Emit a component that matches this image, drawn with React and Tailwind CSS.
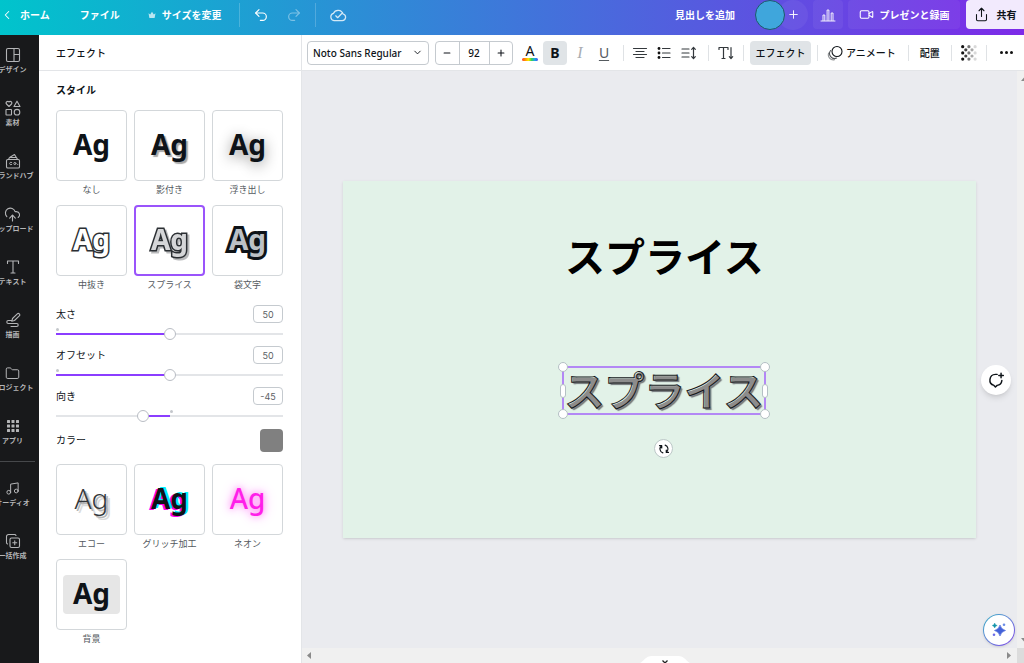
import React, { useState } from "react";
import {
  ChevronLeft, ChevronDown, Undo2, Redo2, Plus, Minus, Video, Share,
  Folder, Music, CloudUpload,
} from "lucide-react";

const stroke = {
  fill: "none",
  stroke: "currentColor",
  strokeWidth: 1.1,
  strokeLinecap: "round",
  strokeLinejoin: "round",
};

const S = ({ size = 16, children, ...rest }) => (
  <svg width={size} height={size} viewBox="0 0 16 16" {...stroke} aria-hidden="true" {...rest}>
    {children}
  </svg>
);

const CrownIcon = () => (
  <svg width="8" height="8" viewBox="0 0 8 8" fill="currentColor" aria-hidden="true">
    <path d="M0.5 2.2 2.2 3.4 4 0.8 5.8 3.4 7.5 2.2 6.6 7H1.4Z" />
  </svg>
);
const CloudCheckIcon = () => (
  <S size={18}>
    <path d="M4.5 13h7.2a3 3 0 0 0 .8-5.9A4.6 4.6 0 0 0 3.9 6.6 3.3 3.3 0 0 0 4.5 13Z" />
    <path d="m6 8.7 1.7 1.7L12 6" />
  </S>
);
const ChartIcon = () => (
  <S strokeWidth="0.9">
    <path d="M1 14h14M3 13.5V8h1.800v5.500M7.100 13.500V3h1.800v10.500M11.200 13.500V6H13v7.500" />
  </S>
);
const DesignIcon = () => (
  <S>
    <rect x="1.500" y="1.500" width="13" height="13" rx="1.500" />
    <path d="M9 1.500v13M9 7.500h5.500" />
  </S>
);
const ElementsIcon = () => (
  <S>
    <path d="M4 6.500 1.500 4a1.500 1.500 0 0 1 2.500-2 1.500 1.500 0 0 1 2.500 2ZM12 1.200l3 5.300H9Z" />
    <rect x="1" y="9.500" width="5.500" height="5.500" rx=".5" />
    <circle cx="12" cy="12.200" r="2.800" />
  </S>
);
const BrandIcon = () => (
  <S>
    <rect x="1.500" y="6.500" width="13" height="8.500" rx="1.300" />
    <path d="M3.500 6.500 4.500 4.500h7l1 2M5 4.300l4.500-2.800 1.700 2.700" />
    <path d="M6.800 9.500a1.300 1.300 0 1 0 0 2M11 10.500a1.100 1.100 0 1 1-2.200 0 1.100 1.100 0 0 1 2.200 0M12.700 11.500h.1" strokeWidth=".9" />
  </S>
);
const TextIcon = () => (
  <S>
    <path d="M2.500 4.500V2h11v2.500M8 2v12M6 14h4" />
  </S>
);
const DrawIcon = () => (
  <S>
    <path d="m7.500 6.500 4.800-4.600a1.400 1.400 0 0 1 2 2L9.500 8.500l-2.700.8ZM6.500 8.500H3.300a1.500 1.500 0 0 0 0 3h8.400a1.500 1.500 0 0 1 0 3H6" />
  </S>
);
const AppsIcon = () => (
  <svg width="16" height="16" viewBox="0 0 16 16" fill="currentColor" aria-hidden="true">
    {[2, 6.5, 11].map((y) => [2, 6.5, 11].map((x) => (
      <rect key={x + "-" + y} x={x} y={y} width="3" height="3" rx=".5" />
    )))}
  </svg>
);
const BulkIcon = () => (
  <S>
    <rect x="5" y="5" width="9.500" height="9.500" rx="1.500" />
    <path d="M9.750 7.800v4M7.750 9.800h4M2.500 11A1.500 1.500 0 0 1 1.500 9.500v-6a2 2 0 0 1 2-2h6A1.500 1.500 0 0 1 11 2.500" />
  </S>
);
const AlignIcon = () => (
  <S strokeWidth="1.2">
    <path d="M1.500 3.500h13M4 6.500h8M1.500 9.500h13M4 12.500h8" />
  </S>
);
const ListIcon = () => (
  <S strokeWidth="1.2">
    <path d="M6.500 3.500h7.500M6.500 8h7.500M6.500 12.500h7.500" />
    <g fill="#111" stroke="none">
      <circle cx="3" cy="3.500" r="1.400" />
      <circle cx="3" cy="8" r="1.400" />
      <circle cx="3" cy="12.500" r="1.400" />
    </g>
  </S>
);
const SpacingIcon = () => (
  <S strokeWidth="1.2">
    <path d="M1 4h7M1 8h7M1 12h7M12.500 2.500v11M10.700 4.300l1.800-2 1.800 2M10.700 11.700l1.800 2 1.800-2" />
  </S>
);
const VerticalIcon = () => (
  <S strokeWidth="1.2">
    <path d="M1 4.500V2.500h9v2M5.500 2.500v11M4 13.500h3M13 2.500v11M11.300 11.700l1.700 1.800 1.700-1.800" />
  </S>
);
const AnimateIcon = () => (
  <S>
    <circle cx="10" cy="6.500" r="5" />
    <path d="M3.600 5.500a5 5 0 0 0 6 7.600" opacity=".7" />
    <path d="M1.700 8a5 5 0 0 0 5.800 6.700" opacity=".45" />
  </S>
);
const TransparencyIcon = () => (
  <svg width="16" height="16" viewBox="0 0 16 16" fill="#111" aria-hidden="true">
    {[0, 1, 2, 3, 4].map((r) => [0, 1, 2, 3, 4].map((c) =>
      (r + c) % 2 === 0 ? (
        <circle key={r + "-" + c} cx={1.7 + c * 3.1} cy={1.7 + r * 3.1} r="1.600" opacity={1 - c * 0.21} />
      ) : null
    ))}
  </svg>
);
const CommentIcon = () => (
  <S size={18} strokeWidth="1.3">
    <path d="M9 3H7.500a5 5 0 0 0-1.300 9.800L7.500 14.200 9 12.800A5 5 0 0 0 13.200 8.500" />
    <path d="M12.500 2v4M10.500 4h4" />
  </S>
);
const RotateIcon = () => (
  <S size={12} strokeWidth="1.500">
    <path d="M6.500 13.200A5.400 5.400 0 0 1 4.500 4M2 3.500h3v3M9.500 2.800a5.400 5.400 0 0 1 2 9.200M14 12.500h-3v-3" />
  </S>
);
const SparkleIcon = () => (
  <svg width="16" height="16" viewBox="0 0 16 16" aria-hidden="true">
    <path d="M9 3q1 4.300 5.500 5.500Q10 9.700 9 14 8 9.700 3.500 8.500 8 7.300 9 3Z" fill="#4361d8" stroke="#4361d8" strokeWidth=".6" />
    <path d="M3.700 1q.4 2 2.500 2.500-2.100.5-2.500 2.500-.4-2-2.500-2.500 2.100-.5 2.500-2.500Z" fill="#1595ab" stroke="#1595ab" strokeWidth=".4" />
    <circle cx="13" cy="2.800" r="1.300" fill="#6c8ee6" />
    <circle cx="3" cy="12.800" r="1.300" fill="#6a6be8" />
  </svg>
);

const lucideNav = { size: 15, strokeWidth: 1.6 };
const navItems = [
  ["デザイン", <DesignIcon />],
  ["素材", <ElementsIcon />],
  ["ブランドハブ", <BrandIcon />],
  ["アップロード", <CloudUpload {...lucideNav} size={17} />],
  ["テキスト", <TextIcon />],
  ["描画", <DrawIcon />],
  ["プロジェクト", <Folder {...lucideNav} />],
  ["アプリ", <AppsIcon />],
];
const navExtras = [
  ["オーディオ", <Music {...lucideNav} />],
  ["一括作成", <BulkIcon />],
];

function NavList({ items }) {
  return items.map(([label, icon]) => (
    <a key={label} href="#" className="flex h-[53px] w-full shrink-0 flex-col items-center">
      <span className="flex h-4 shrink-0 items-center">{icon}</span>
      <span className="text-[7px] leading-3 font-bold whitespace-nowrap">{label}</span>
    </a>
  ));
}

const styles = [
  ["なし", "font-bold text-[#0e1318]"],
  ["影付き", "font-bold text-[#0e1318] [text-shadow:2px_2px_1px_#a9a9a9]"],
  ["浮き出し", "font-bold text-[#0e1318] [text-shadow:0_3px_14px_rgba(0,0,0,0.45)]"],
  ["中抜き", "font-bold text-white [-webkit-text-stroke:3px_#2b2f33] [paint-order:stroke_fill]"],
  ["スプライス", "font-bold text-[#d5d6d8] [-webkit-text-stroke:3px_#2b2f33] [paint-order:stroke_fill] drop-shadow-[2px_2px_0_#b9babc]"],
  ["袋文字", "font-bold text-[#bcc1c6] [-webkit-text-stroke:6px_#0e1318] [paint-order:stroke_fill]"],
];
const moreStyles = [
  ["エコー", "font-light text-[#33373b] [text-shadow:2px_2px_0_#b5b5b5,4px_4px_0_#dcdcdc]"],
  ["グリッチ加工", "font-bold text-[#0e1318] [text-shadow:2px_-1px_0_#00f2ff,-2px_1px_0_#ff00f2]"],
  ["ネオン", "font-medium text-[#ff1fe9] [text-shadow:0_0_7px_#ff7af3,0_0_14px_#ffb5f8]"],
  ["背景", "font-bold text-[#0e1318]"],
];

function StyleGrid({ items, selected, onSelect }) {
  return (
    <div className="grid grid-cols-3 gap-x-[7px] gap-y-1.5">
      {items.map(([label, cls]) => (
        <button key={label} type="button" aria-pressed={selected === label} onClick={() => onSelect(label)} className="flex flex-col items-stretch">
          <span
            className={
              "flex h-[71px] items-center justify-center rounded " +
              (selected === label ? "border-2 border-[#9a54fb]" : "border border-[#d3d7da]")
            }
          >
            <span
              className={
                "flex h-[39px] w-[57px] items-center justify-center rounded-sm pb-[3px] font-['Noto_Sans',sans-serif] text-[28px] leading-none " +
                (label === "背景" ? "bg-[#e6e6e6] " : "") + cls
              }
            >
              Ag
            </span>
          </span>
          <span className="text-center text-[9px] leading-[18px] text-[#54595e]">{label}</span>
        </button>
      ))}
    </div>
  );
}

function EffectSlider({ id, label, min, max, origin, initial }) {
  const [value, setValue] = useState(initial);
  const pct = (v) => ((v - min) / (max - min)) * 100;
  const a = Math.min(pct(value), pct(origin));
  const b = Math.max(pct(value), pct(origin));
  return (
    <div className="mb-1">
      <div className="mb-[3px] flex h-[18px] items-center justify-between">
        <label htmlFor={id} className="text-[10px] leading-4">{label}</label>
        <input
          aria-label={label + "の値"}
          value={value}
          onChange={(e) => setValue(Number(e.target.value) || 0)}
          className="h-[18px] w-[30px] rounded-sm border border-[#c5cacf] text-center font-['Inter',sans-serif] text-[9px] text-[#5c6165]"
        />
      </div>
      <div className="relative flex h-4 items-center">
        <input
          id={id}
          type="range"
          min={min}
          max={max}
          value={value}
          onChange={(e) => setValue(Number(e.target.value))}
          style={{
            background: `linear-gradient(to right, #e3e5e8 ${a}%, #8b3dff ${a}%, #8b3dff ${b}%, #e3e5e8 ${b}%)`,
          }}
          className="h-0.5 w-full appearance-none [&::-webkit-slider-thumb]:h-3 [&::-webkit-slider-thumb]:w-3 [&::-webkit-slider-thumb]:appearance-none [&::-webkit-slider-thumb]:rounded-full [&::-webkit-slider-thumb]:border [&::-webkit-slider-thumb]:border-[#b9bdc4] [&::-webkit-slider-thumb]:bg-white"
        />
        <span className="absolute top-0.5 size-[3px] rounded-full bg-[#c3c6cb]" style={{ left: `${pct(origin)}%` }} />
      </div>
    </div>
  );
}

const Divider = () => <span className="h-4 w-px shrink-0 bg-[#dfe2e5]" />;
const HeaderDivider = () => <span className="h-6 w-px shrink-0 bg-white/20" />;
const Tool = ({ label, children, className = "" }) => (
  <button type="button" aria-label={label} className={"flex h-6 w-6 shrink-0 items-center justify-center rounded-sm " + className}>
    {children}
  </button>
);

function Header() {
  return (
    <header className="flex h-[35px] shrink-0 items-center justify-between overflow-hidden bg-linear-to-r/srgb from-[#00c4cc] to-[#7d2ae8] text-[10px] leading-4 font-bold whitespace-nowrap text-white">
      <div className="flex items-center pb-[6px]">
        <a href="#" className="flex items-center gap-1.5">
          <ChevronLeft size={14} strokeWidth={1.8} />
          ホーム
        </a>
        <button type="button" className="ml-[30px]">ファイル</button>
        <button type="button" className="ml-7 flex items-center gap-1.5">
          <span className="opacity-70"><CrownIcon /></span>
          サイズを変更
        </button>
        <div className="ml-[18px] flex items-center gap-[13px]">
          <HeaderDivider />
          <button type="button" aria-label="元に戻す"><Undo2 size={16} strokeWidth={1.7} /></button>
          <button type="button" aria-label="やり直す" className="ml-1 opacity-40"><Redo2 size={16} strokeWidth={1.7} /></button>
          <HeaderDivider />
          <button type="button" aria-label="保存済み" className="opacity-80"><CloudCheckIcon /></button>
        </div>
      </div>
      <div className="flex items-center pb-[6px]">
        <button type="button" className="mr-[20px]">見出しを追加</button>
        <span className="z-10 size-[30px] rounded-full border border-[#1d5a6b] bg-[#3fa6dc]" />
        <button type="button" aria-label="メンバーを追加" className="-ml-[7px] mr-[5px] flex size-[30px] items-center justify-center rounded-full bg-white/5">
          <Plus size={13} strokeWidth={1.7} />
        </button>
        <button type="button" aria-label="インサイト" className="mr-[5px] flex h-[29px] w-[30px] items-center justify-center rounded-sm bg-white/5">
          <ChartIcon />
        </button>
        <button type="button" className="mr-1.5 flex h-[29px] w-[112px] items-center justify-center gap-1.5 rounded-sm bg-white/5">
          <Video size={15} strokeWidth={1.7} />
          プレゼンと録画
        </button>
        <button type="button" className="flex h-[29px] w-[58px] items-center justify-center gap-2 rounded-l-sm bg-[#f2eafd] text-[#0e1318]">
          <Share size={15} strokeWidth={1.7} />
          共有
        </button>
      </div>
    </header>
  );
}

function Toolbar() {
  return (
    <div className="flex h-9 shrink-0 items-center justify-between overflow-hidden border-b border-[#e3e5e8] bg-white pr-[11px] pl-[5px] text-[10px] leading-4 font-medium whitespace-nowrap">
      <div className="flex items-center">
        <button type="button" className="flex h-6 w-[122px] items-center justify-between rounded-sm border border-[#c5cacf] px-[5px] font-['Noto_Sans',sans-serif] font-medium">
          Noto Sans Regular
          <ChevronDown size={11} strokeWidth={2} />
        </button>
        <div className="ml-1.5 flex h-6 w-[78px] items-stretch rounded-sm border border-[#c5cacf]">
          <button type="button" aria-label="小さく" className="flex flex-1 items-center justify-center"><Minus size={10} strokeWidth={2.500} /></button>
          <input aria-label="フォントサイズ" defaultValue="92" className="w-[31px] border-x border-[#c5cacf] text-center font-['Noto_Sans',sans-serif]" />
          <button type="button" aria-label="大きく" className="flex flex-1 items-center justify-center"><Plus size={10} strokeWidth={2.500} /></button>
        </div>
        <Tool label="テキストの色" className="ml-[5px]">
          <span className="flex flex-col items-center">
            <span className="font-['Noto_Sans',sans-serif] text-sm leading-[14px] font-normal">A</span>
            <span className="h-[3px] w-4 rounded-sm bg-[linear-gradient(to_right,#ff3b30,#ff9500,#ffe600,#34d058,#1aa7ec,#4a4af0)]" />
          </span>
        </Tool>
        <Tool label="太字" className="ml-px bg-[#e0e4e7] font-['Noto_Sans',sans-serif] text-sm font-bold">B</Tool>
        <Tool label="斜体" className="ml-px font-['Liberation_Serif',serif] text-base text-[#a9adb2] italic">I</Tool>
        <Tool label="下線" className="mr-[7px] font-['Noto_Sans',sans-serif] text-sm font-normal text-[#555a5f] underline underline-offset-2">U</Tool>
        <Divider />
        <div className="mr-[7px] ml-1 flex text-[#33383c]">
          <Tool label="配置揃え"><AlignIcon /></Tool>
          <Tool label="リスト"><ListIcon /></Tool>
          <Tool label="スペース" className="ml-px"><SpacingIcon /></Tool>
        </div>
        <Divider />
        <Tool label="縦書き" className="mx-[5px] text-[#33383c]"><VerticalIcon /></Tool>
        <Divider />
        <button type="button" className="mx-1.5 h-6 w-[61px] rounded-sm bg-[#e0e4e7]">エフェクト</button>
        <Divider />
        <button type="button" className="mr-3 ml-[9px] flex items-center gap-[3px]"><AnimateIcon />アニメート</button>
        <Divider />
        <button type="button" className="mx-[11px]">配置</button>
        <Divider />
        <Tool label="透明度" className="mx-[5px]"><TransparencyIcon /></Tool>
        <Divider />
      </div>
      <button type="button" aria-label="もっと見る" className="flex gap-0.5">
        <span className="size-[3px] rounded-full bg-[#111]" />
        <span className="size-[3px] rounded-full bg-[#111]" />
        <span className="size-[3px] rounded-full bg-[#111]" />
      </button>
    </div>
  );
}

const handle = "absolute rounded-full border border-[#b4bfc4] bg-white ";

function Canvas() {
  return (
    <div className="relative mx-[41px] aspect-video min-w-0 flex-1 bg-[#e2f2e8] shadow-sm">
      <h1 className="absolute top-[46px] left-[222px] text-[40px] leading-[56px] font-bold whitespace-nowrap text-black">スプライス</h1>
      <div className="absolute top-[185px] left-[219px] flex h-[49px] w-[204px] items-center justify-center border-2 border-[#b388f5]">
        <span className="pb-1 text-[40px] leading-[44px] font-bold whitespace-nowrap text-transparent [-webkit-text-stroke:1px_#15181b] [text-shadow:1px_1px_0_#8c8c8c,2px_2px_1px_#707578]">スプライス</span>
        <span className={handle + "-top-1.5 -left-1.5 size-[10px]"} />
        <span className={handle + "-top-1.5 -right-1.5 size-[10px]"} />
        <span className={handle + "-bottom-1.5 -left-1.5 size-[10px]"} />
        <span className={handle + "-right-1.5 -bottom-1.5 size-[10px]"} />
        <span className={handle + "top-4 -left-1 h-[14px] w-[6px]"} />
        <span className={handle + "top-4 -right-1 h-[14px] w-[6px]"} />
      </div>
      <button type="button" aria-label="回転" className="absolute top-[258px] left-[311px] flex size-[19px] items-center justify-center rounded-full border border-[#bcc7c7] bg-white">
        <RotateIcon />
      </button>
    </div>
  );
}

export default function App() {
  const [selected, setSelected] = useState("スプライス");
  return (
    <div className="flex h-screen flex-col overflow-hidden bg-white font-['Noto_Sans_CJK_JP',sans-serif] text-[#0e1318]">
      <Header />
      <div className="flex min-h-0 flex-1">
        <nav className="w-[39px] shrink-0 overflow-hidden bg-[#18191b] pt-3 text-[#b4b5b7]">
          <div className="flex w-[25px] flex-col">
            <NavList items={navItems} />
          </div>
          <hr className="-mt-[10px] mr-1 mb-[18px] border-[#46484b]" />
          <div className="flex w-[25px] flex-col">
            <NavList items={navExtras} />
          </div>
        </nav>
        <aside className="flex w-[263px] shrink-0 flex-col border-r border-[#e3e5e8]">
          <h2 className="flex h-9 shrink-0 items-center border-b border-[#e3e5e8] pl-[17px] text-[10px] leading-4 font-medium">エフェクト</h2>
          <div className="min-h-0 flex-1 overflow-hidden pr-[18px] pl-[17px]">
            <h3 className="pt-[11px] pb-3 text-[10px] leading-4 font-bold">スタイル</h3>
            <StyleGrid items={styles} selected={selected} onSelect={setSelected} />
            <div className="pt-[11px]">
              <EffectSlider id="thickness" label="太さ" min={0} max={100} origin={0} initial={50} />
              <EffectSlider id="offset" label="オフセット" min={0} max={100} origin={0} initial={50} />
              <EffectSlider id="direction" label="向き" min={-180} max={180} origin={0} initial={-45} />
            </div>
            <div className="mb-3 flex h-6 items-center justify-between text-[10px] leading-4">
              <span>カラー</span>
              <button type="button" aria-label="カラーを選択" className="size-[23px] rounded-sm bg-[#808080]" />
            </div>
            <StyleGrid items={moreStyles} selected={selected} onSelect={setSelected} />
          </div>
        </aside>
        <main className="flex min-w-0 flex-1 flex-col">
          <Toolbar />
          <div className="flex min-h-0 flex-1">
            <div className="relative flex min-w-0 flex-1 items-center bg-[#eaebef]">
              <Canvas />
              <button type="button" aria-label="コメントを追加" className="absolute top-[294px] right-[6px] flex size-[30px] items-center justify-center rounded-full bg-white shadow-md">
                <CommentIcon />
              </button>
              <button type="button" aria-label="アシスタント" className="absolute right-0.5 bottom-0.5 flex size-8 items-center justify-center rounded-full bg-linear-to-br from-[#20b0c4] to-[#7d3fe8] p-px shadow">
                <span className="flex size-full items-center justify-center rounded-full bg-white"><SparkleIcon /></span>
              </button>
            </div>
            <div className="flex w-[7px] shrink-0 flex-col justify-between overflow-hidden bg-[#f0f0f0] py-1.5 pl-1">
              <svg width="7" height="4" viewBox="0 0 7 4" fill="#8a8a8a"><path d="M0 4 3.500 0 7 4Z" /></svg>
              <svg width="7" height="4" viewBox="0 0 7 4" fill="#8a8a8a"><path d="M0 0 3.500 4 7 0Z" /></svg>
            </div>
          </div>
          <div className="flex h-[15px] shrink-0 items-stretch bg-[#f0f0f0]">
            <div className="flex min-w-0 flex-1 items-center justify-between pr-1.5 pl-[5px]">
              <svg width="4" height="7" viewBox="0 0 4 7" fill="#8a8a8a"><path d="M4 0 0 3.500 4 7Z" /></svg>
              <button type="button" aria-label="ページを表示" className="mt-2 ml-3 flex h-2 items-end">
                <svg width="56" height="8" viewBox="0 0 56 8">
                  <path d="M0 8C7 7 7 0 15 0h26c8 0 8 7 15 8Z" fill="#fff" />
                  <path d="m25.500 4.500 2.500 2.500 2.500-2.500" fill="none" stroke="#222" strokeWidth="1.300" />
                </svg>
              </button>
              <svg width="4" height="7" viewBox="0 0 4 7" fill="#8a8a8a"><path d="M0 0 4 3.500 0 7Z" /></svg>
            </div>
            <div className="w-[7px] bg-[#dcdcdc]" />
          </div>
        </main>
      </div>
    </div>
  );
}
